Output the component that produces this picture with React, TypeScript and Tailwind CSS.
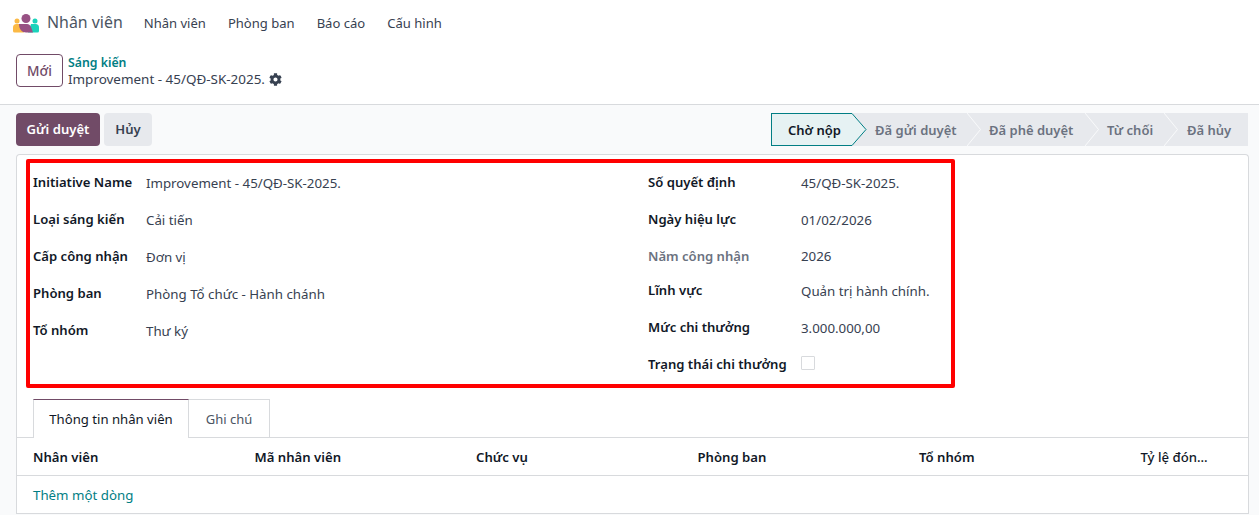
import { FaCog } from "react-icons/fa"

const leftRows = [
  ["Initiative Name", "Improvement - 45/QĐ-SK-2025."],
  ["Loại sáng kiến", "Cải tiến"],
  ["Cấp công nhận", "Đơn vị"],
  ["Phòng ban", "Phòng Tổ chức - Hành chánh"],
  ["Tổ nhóm", "Thư ký"],
]

const rightRows = [
  ["Số quyết định", "45/QĐ-SK-2025."],
  ["Ngày hiệu lực", "01/02/2026"],
  ["Năm công nhận", "2026"],
  ["Lĩnh vực", "Quản trị hành chính."],
  ["Mức chi thưởng", "3.000.000,00"],
]

const columns = ["Nhân viên", "Mã nhân viên", "Chức vụ", "Phòng ban", "Tổ nhóm"]

function Logo() {
  return (
    <svg width="26" height="19" viewBox="0 0 26 19" className="shrink-0">
      <circle cx="4" cy="7" r="2.5" fill="#fbb945" />
      <circle cx="22" cy="7" r="2.5" fill="#1ad3bb" />
      <path d="M0 13.5a3.5 3.5 0 0 1 3.5-3.5H8l3 8.5H1.5A1.5 1.5 0 0 1 0 17z" fill="#fbb945" />
      <path d="M26 13.5a3.5 3.5 0 0 0-3.5-3.5H18l-3 8.5h9.5a1.5 1.5 0 0 0 1.5-1.5z" fill="#1ad3bb" />
      <circle cx="13" cy="4.5" r="4.5" fill="#985184" />
      <path d="M6 10h8c2 0 3 1 4 3l2 5.5h-7c-4 0-7-3-7-8.5z" fill="#985184" />
    </svg>
  )
}

function Field({ label, value, muted, labelWidth, short }: { label: string; value: string; muted?: boolean; labelWidth: string; short?: boolean }) {
  return (
    <div className={`flex items-start ${short ? "h-[34px]" : "h-[36.9px]"}`}>
      <div className={`${labelWidth} text-[13.1px] font-semibold leading-[20px] ${muted ? "text-[#6b7280]" : "text-[#111827]"}`}>{label}</div>
      <div className={`leading-[20px] text-[#374151] ${muted ? "" : "pt-[1px]"}`}>{value}</div>
    </div>
  )
}

function Step({ label, width, pad }: { label: string; width: string; pad: string }) {
  return (
    <div className={`relative flex h-[33px] items-center bg-[#e7e9ed] pt-[2px] text-[13px] font-semibold text-[#6b7280] ${width} ${pad}`}>
      {label}
      <svg width="15" height="33" viewBox="0 0 15 33" className="absolute left-full top-0 z-10">
        <path d="M0 0L13.5 16.5L0 33" fill="#e7e9ed" stroke="#f9fafb" />
      </svg>
    </div>
  )
}

export default function App() {
  return (
    <div className="h-[515px] w-[1259px] overflow-hidden bg-[#f9fafb] font-['Noto_Sans',sans-serif] text-[13.3px] text-[#374151]">
      <div className="bg-white">
        <nav className="flex h-[46px] items-center pl-[13px]">
          <Logo />
          <span className="ml-[8px] text-[15.9px] text-[#4b5563]">Nhân viên</span>
          <div className="ml-[21px] flex gap-[22px] pt-[2px] text-[13.05px] text-[#374151]">
            <span>Nhân viên</span>
            <span>Phòng ban</span>
            <span>Báo cáo</span>
            <span>Cấu hình</span>
          </div>
        </nav>
        <div className="flex h-[59px] items-start border-b border-[#d8dadd] pl-[16px] pt-[8px]">
          <button className="h-[33px] w-[47px] rounded-[4px] border border-[#714b67] pt-[1px] text-[13.6px] font-medium text-[#714b67]">Mới</button>
          <div className="ml-[5px] leading-[17px]">
            <div className="text-[12.3px] font-semibold text-[#017e84]">Sáng kiến</div>
            <div className="flex items-center gap-[4px] text-[13.45px] text-[#374151]">
              Improvement - 45/QĐ-SK-2025.
              <FaCog size={13} className="text-[#374151]" />
            </div>
          </div>
        </div>
      </div>

      <div className="flex h-[49px] items-start justify-between pl-[16px] pr-[11px] pt-[8px]">
        <div className="flex gap-[4px] text-[13.1px] font-semibold">
          <button className="h-[33px] w-[84px] rounded-[4px] bg-[#714b67] pt-[1px] text-white">Gửi duyệt</button>
          <button className="h-[33px] w-[48px] rounded-[4px] bg-[#e7e9ed] pt-[1px] text-[#374151]">Hủy</button>
        </div>
        <div className="flex">
          <div className="relative z-20 flex h-[33px] w-[81px] items-center border border-r-0 border-[#017e84] bg-[#e6f2f3] pl-[16px] pt-[2px] text-[13px] font-semibold text-[#111827]">
            Chờ nộp
            <svg width="15" height="33" viewBox="0 0 15 33" className="absolute left-[80px] top-[-1px]">
              <path d="M0 0.5L14 16.5L0 32.5Z" fill="#e6f2f3" />
              <path d="M0 0.5L14 16.5L0 32.5" fill="none" stroke="#017e84" />
            </svg>
          </div>
          <Step label="Đã gửi duyệt" width="w-[115px]" pad="pl-[23px]" />
          <Step label="Đã phê duyệt" width="w-[118px]" pad="pl-[22px]" />
          <Step label="Từ chối" width="w-[79px]" pad="pl-[22px]" />
          <div className="flex h-[33px] w-[84px] items-center bg-[#e7e9ed] pl-[23px] pt-[2px] text-[13px] font-semibold text-[#6b7280]">Đã hủy</div>
        </div>
      </div>

      <div className="ml-[16px] mr-[10px] rounded-t-[4px] border border-b-0 border-[#d8dadd] bg-white pt-[4px]">
        <div className="ml-[9px] flex h-[229px] w-[929px] rounded-[2px] border-4 border-[#ff0000] pl-[3px] pt-[9px]">
          <div className="w-[615px]">
            {leftRows.map(([label, value]) => (
              <Field key={label} label={label} value={value} labelWidth="w-[113px]" />
            ))}
          </div>
          <div>
            {rightRows.map(([label, value]) => (
              <Field
                key={label}
                label={label}
                value={value}
                muted={label === "Năm công nhận"}
                short={label === "Năm công nhận"}
                labelWidth="w-[153px]"
              />
            ))}
            <div className="flex items-start">
              <div className="w-[153px] text-[13.1px] font-semibold leading-[20px] text-[#111827]">Trạng thái chi thưởng</div>
              <div className="mt-[2px] h-[14px] w-[14px] rounded-[1px] border border-[#d8dadd]" />
            </div>
          </div>
        </div>

        <div className="mt-[11px] flex h-[39px] border-b border-[#d8dadd] pl-[16px]">
          <div className="h-[39px] w-[156px] border-x border-t border-[#d8dadd] border-t-[#714b67] bg-white pt-[10px] text-center text-[13.15px] text-[#111827]">Thông tin nhân viên</div>
          <div className="h-[38px] w-[81px] border-r border-t border-[#d8dadd] pt-[10px] text-center text-[13px] text-[#4b5563]">Ghi chú</div>
        </div>

        <div className="grid h-[38px] grid-cols-[221.5px_221.5px_221.5px_221.5px_221.5px_1fr] items-center border-b border-[#d8dadd] pl-[16px] pt-[2px] text-[13.15px] font-semibold text-[#111827]">
          {columns.map((c) => (
            <span key={c}>{c}</span>
          ))}
          <span className="font-medium">Tỷ lệ đón...</span>
        </div>
        <div className="flex h-[38px] items-center border-b border-[#d8dadd] pl-[16px] pt-[2px] text-[#017e84]">Thêm một dòng</div>
      </div>
    </div>
  )
}
